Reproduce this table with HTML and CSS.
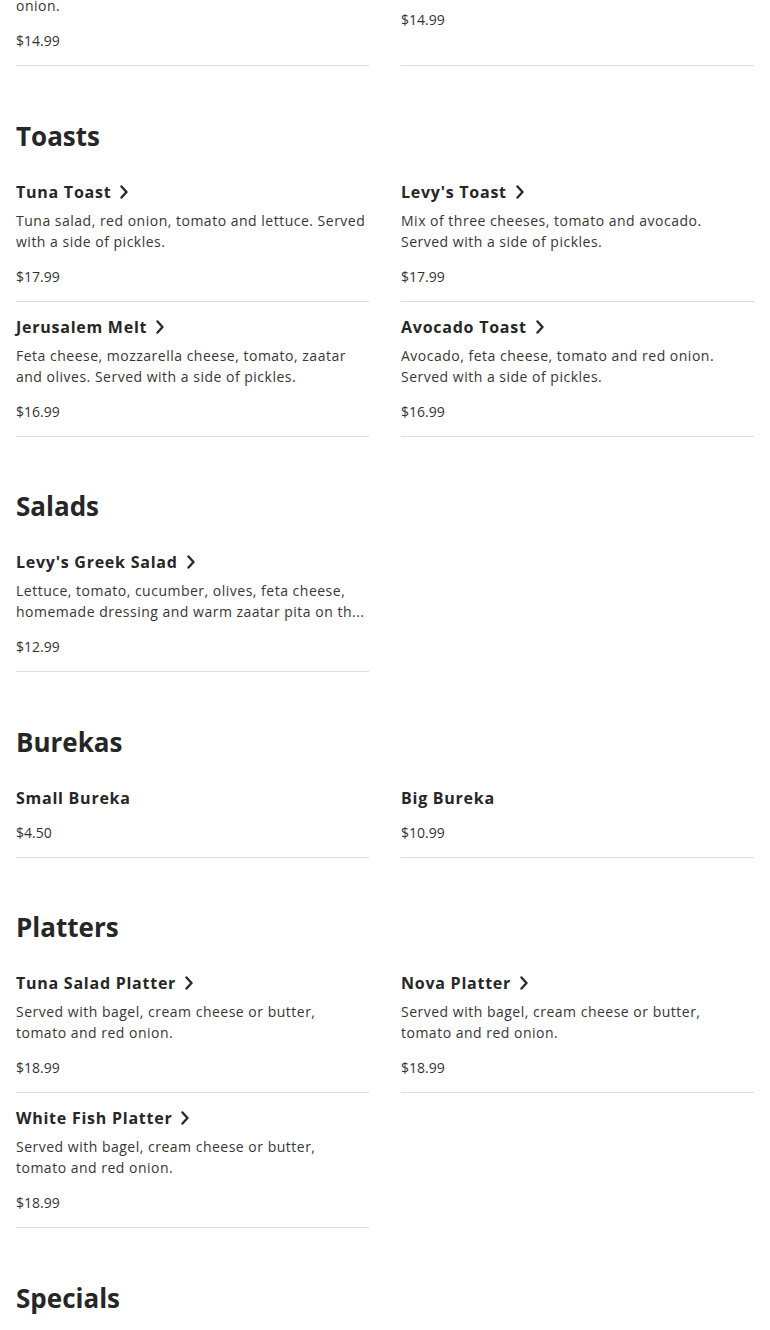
FILE: index.html
```html
<!DOCTYPE html>
<html lang="en">
<head>
<meta charset="utf-8">
<title>Menu</title>
<link rel="stylesheet" href="styles.css">
</head>
<body>
<main class="menu">
  <section class="section section--cut">
    <div class="grid">
      <div class="item">
        <h3 class="item-title"><span>Lox Bagel</span><svg class="chev" viewBox="0 0 8 14"><path d="M1.5 1.5 L6.5 7 L1.5 12.5"/></svg></h3>
        <p class="item-desc">Served with cream cheese, capers, tomato,<br>cucumber, lettuce and red<br>onion.</p>
        <p class="item-price">$14.99</p>
      </div>
      <div class="item">
        <h3 class="item-title"><span>Egg Bagel</span><svg class="chev" viewBox="0 0 8 14"><path d="M1.5 1.5 L6.5 7 L1.5 12.5"/></svg></h3>
        <p class="item-desc">Two eggs, cheese, tomato and lettuce. Served<br>with a side of pickles.</p>
        <p class="item-price">$14.99</p>
      </div>
    </div>
  </section>

  <section class="section">
    <h2 class="section-title">Toasts</h2>
    <div class="grid">
      <div class="item">
        <h3 class="item-title"><span>Tuna Toast</span><svg class="chev" viewBox="0 0 8 14"><path d="M1.5 1.5 L6.5 7 L1.5 12.5"/></svg></h3>
        <p class="item-desc">Tuna salad, red onion, tomato and lettuce. Served<br>with a side of pickles.</p>
        <p class="item-price">$17.99</p>
      </div>
      <div class="item">
        <h3 class="item-title"><span>Levy's Toast</span><svg class="chev" viewBox="0 0 8 14"><path d="M1.5 1.5 L6.5 7 L1.5 12.5"/></svg></h3>
        <p class="item-desc">Mix of three cheeses, tomato and avocado.<br>Served with a side of pickles.</p>
        <p class="item-price">$17.99</p>
      </div>
      <div class="item">
        <h3 class="item-title"><span>Jerusalem Melt</span><svg class="chev" viewBox="0 0 8 14"><path d="M1.5 1.5 L6.5 7 L1.5 12.5"/></svg></h3>
        <p class="item-desc">Feta cheese, mozzarella cheese, tomato, zaatar<br>and olives. Served with a side of pickles.</p>
        <p class="item-price">$16.99</p>
      </div>
      <div class="item">
        <h3 class="item-title"><span>Avocado Toast</span><svg class="chev" viewBox="0 0 8 14"><path d="M1.5 1.5 L6.5 7 L1.5 12.5"/></svg></h3>
        <p class="item-desc">Avocado, feta cheese, tomato and red onion.<br>Served with a side of pickles.</p>
        <p class="item-price">$16.99</p>
      </div>
    </div>
  </section>

  <section class="section">
    <h2 class="section-title">Salads</h2>
    <div class="grid">
      <div class="item">
        <h3 class="item-title"><span>Levy's Greek Salad</span><svg class="chev" viewBox="0 0 8 14"><path d="M1.5 1.5 L6.5 7 L1.5 12.5"/></svg></h3>
        <p class="item-desc item-desc--nowrap">Lettuce, tomato, cucumber, olives, feta cheese,<br>homemade dressing and warm zaatar pita on th...</p>
        <p class="item-price">$12.99</p>
      </div>
    </div>
  </section>

  <section class="section">
    <h2 class="section-title">Burekas</h2>
    <div class="grid">
      <div class="item">
        <h3 class="item-title"><span>Small Bureka</span></h3>
        <p class="item-price">$4.50</p>
      </div>
      <div class="item">
        <h3 class="item-title"><span>Big Bureka</span></h3>
        <p class="item-price">$10.99</p>
      </div>
    </div>
  </section>

  <section class="section">
    <h2 class="section-title">Platters</h2>
    <div class="grid">
      <div class="item">
        <h3 class="item-title"><span>Tuna Salad Platter</span><svg class="chev" viewBox="0 0 8 14"><path d="M1.5 1.5 L6.5 7 L1.5 12.5"/></svg></h3>
        <p class="item-desc">Served with bagel, cream cheese or butter,<br>tomato and red onion.</p>
        <p class="item-price">$18.99</p>
      </div>
      <div class="item">
        <h3 class="item-title"><span>Nova Platter</span><svg class="chev" viewBox="0 0 8 14"><path d="M1.5 1.5 L6.5 7 L1.5 12.5"/></svg></h3>
        <p class="item-desc">Served with bagel, cream cheese or butter,<br>tomato and red onion.</p>
        <p class="item-price">$18.99</p>
      </div>
      <div class="item">
        <h3 class="item-title"><span>White Fish Platter</span><svg class="chev" viewBox="0 0 8 14"><path d="M1.5 1.5 L6.5 7 L1.5 12.5"/></svg></h3>
        <p class="item-desc">Served with bagel, cream cheese or butter,<br>tomato and red onion.</p>
        <p class="item-price">$18.99</p>
      </div>
    </div>
  </section>

  <section class="section">
    <h2 class="section-title">Specials</h2>
  </section>
</main>
</body>
</html>
```

FILE: styles.css
```css
* { box-sizing: border-box; }

html, body {
  margin: 0;
  padding: 0;
  background: #ffffff;
}

body {
  font-family: "Open Sans", "Liberation Sans", sans-serif;
  color: #2a2a2a;
  overflow: hidden;
}

.menu {
  padding: 0 16px;
}

.section {
  padding-top: 51.5px;
}

.section--cut {
  padding-top: 0;
  margin-top: -90px;
}

.section-title {
  margin: 0 0 13px;
  font-size: 26px;
  line-height: 36px;
  font-weight: 700;
  color: #262626;
}

.grid {
  display: grid;
  grid-template-columns: 353px 353px;
  column-gap: 32px;
}

.item {
  display: flex;
  flex-direction: column;
  padding: 13px 0 14px;
  border-bottom: 1px solid #dcdcdc;
}

.item-title {
  margin: 0;
  display: flex;
  align-items: center;
  gap: 9px;
  font-size: 16px;
  line-height: 24px;
  font-weight: 700;
  letter-spacing: 0.75px;
  color: #262626;
}

.chev {
  width: 8px;
  height: 14px;
  flex: none;
}

.chev path {
  fill: none;
  stroke: #2a2a2a;
  stroke-width: 2.4;
  stroke-linecap: round;
  stroke-linejoin: round;
}

.item-desc {
  margin: 6px 0 2px;
  font-size: 14px;
  line-height: 21px;
  letter-spacing: 0.5px;
  color: #363636;
}

.item-desc--nowrap {
  white-space: nowrap;
  overflow: hidden;
}

.item-price {
  margin: 12px 0 0;
  font-size: 14px;
  line-height: 21px;
  color: #333333;
}
```
